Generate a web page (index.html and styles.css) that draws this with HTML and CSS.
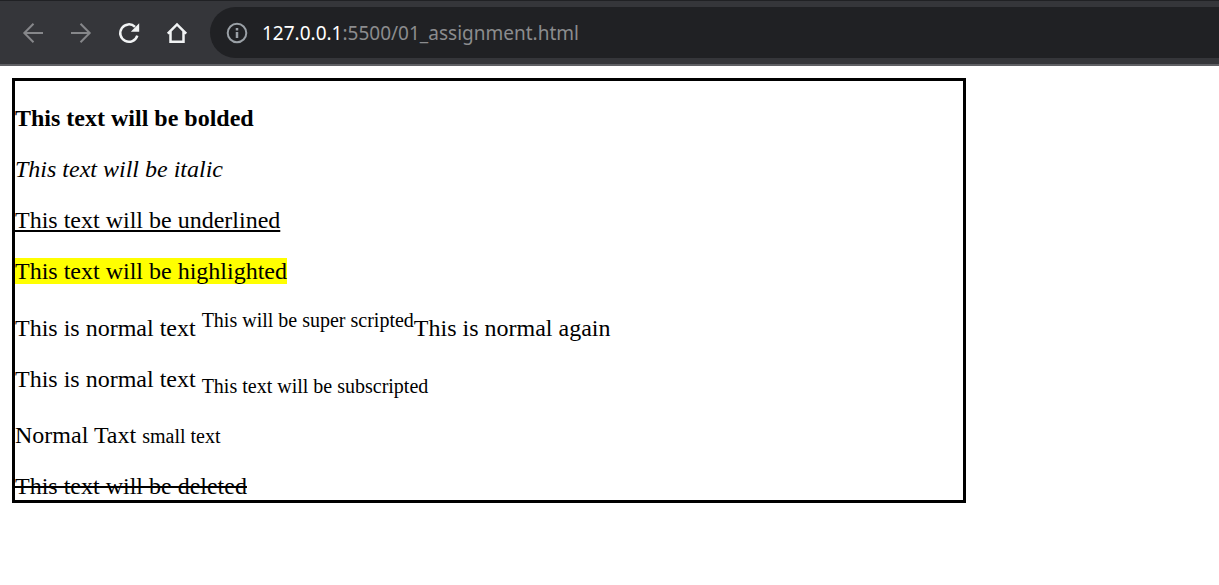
FILE: index.html
```html
<!DOCTYPE html>
<html lang="en">
<head>
<meta charset="utf-8">
<title>Assignment</title>
<link rel="stylesheet" href="styles.css">
</head>
<body>
<header class="toolbar">
  <nav class="controls" aria-label="Browser controls">
    <button class="tool dim" type="button" aria-label="Back">
      <svg viewBox="0 0 26 26"><path d="M23 13H4.500M13.500 3.800L4.300 13l9.200 9.200"/></svg>
    </button>
    <button class="tool dim" type="button" aria-label="Forward">
      <svg viewBox="0 0 26 26"><path d="M3 13H21.500M12.500 3.800L21.700 13l-9.200 9.200"/></svg>
    </button>
    <button class="tool" type="button" aria-label="Reload">
      <svg viewBox="0 0 26 26"><path class="thick" d="M21.300 15.600A8.700 8.700 0 1 1 19 6.800"/><path class="solid" d="M23.200 3.300v8.400h-8.400z"/></svg>
    </button>
    <button class="tool" type="button" aria-label="Home">
      <svg viewBox="0 0 26 26"><path class="thick" d="M3.800 13.600L13 4.400l9.200 9.200M6.500 11.500v10.300h13V11.500"/></svg>
    </button>
  </nav>
  <div class="address">
    <svg class="info" viewBox="0 0 26 26"><circle cx="13" cy="13" r="9.300"/><path class="thick" d="M13 12v6M13 8v2.400"/></svg>
    <a class="url" href="#"><span class="host">127.0.0.1</span>:5500/01_assignment.html</a>
  </div>
</header>
<main class="sheet">
  <p><b>This text will be bolded</b></p>
  <p><i>This text will be italic</i></p>
  <p><u>This text will be underlined</u></p>
  <p><mark>This text will be highlighted</mark></p>
  <p>This is normal text <sup>This will be super scripted</sup>This is normal again</p>
  <p>This is normal text <sub>This text will be subscripted</sub></p>
  <p>Normal Taxt <small>small text</small></p>
  <del>This text will be deleted</del>
</main>
</body>
</html>
```

FILE: styles.css
```css
* { box-sizing: border-box; }

body {
  margin: 0;
  background: #fff;
  color: #000;
  font-family: "Liberation Serif", "Times New Roman", serif;
  font-size: 24px;
}

.toolbar {
  display: flex;
  align-items: center;
  gap: 20px;
  padding: 6px 0 6px 20px;
  background: #35363a;
  border-top: 1px solid #202124;
  border-bottom: 2px solid #5f6064;
}

.controls {
  display: flex;
  gap: 22px;
}

.tool {
  display: flex;
  padding: 0;
  border: 0;
  background: none;
  color: #f1f3f4;
}

.tool svg,
.info {
  width: 26px;
  height: 26px;
  fill: none;
  stroke: currentColor;
  stroke-width: 2;
}

.tool .thick,
.info .thick { stroke-width: 2.5; }

.tool .solid {
  fill: currentColor;
  stroke: none;
}

.dim { color: #86878a; }

.address {
  display: flex;
  flex: 1;
  align-items: center;
  gap: 12px;
  min-height: 51px;
  padding-left: 14px;
  border-radius: 26px 0 0 26px;
  background: #202124;
}

.info { color: #9aa0a6; }

.url {
  color: #8b8c8e;
  font-family: "Noto Sans", "Open Sans", sans-serif;
  font-size: 19px;
  line-height: 28px;
  text-decoration: none;
}

.host { color: #fff; }

.sheet {
  max-width: 954px;
  margin: 12px;
  border: 3px solid #000;
}

.sheet p { margin: 24px 0; }

.sheet sup,
.sheet sub,
.sheet small { font-size: 20px; }

mark { background: #ff0; }
```
